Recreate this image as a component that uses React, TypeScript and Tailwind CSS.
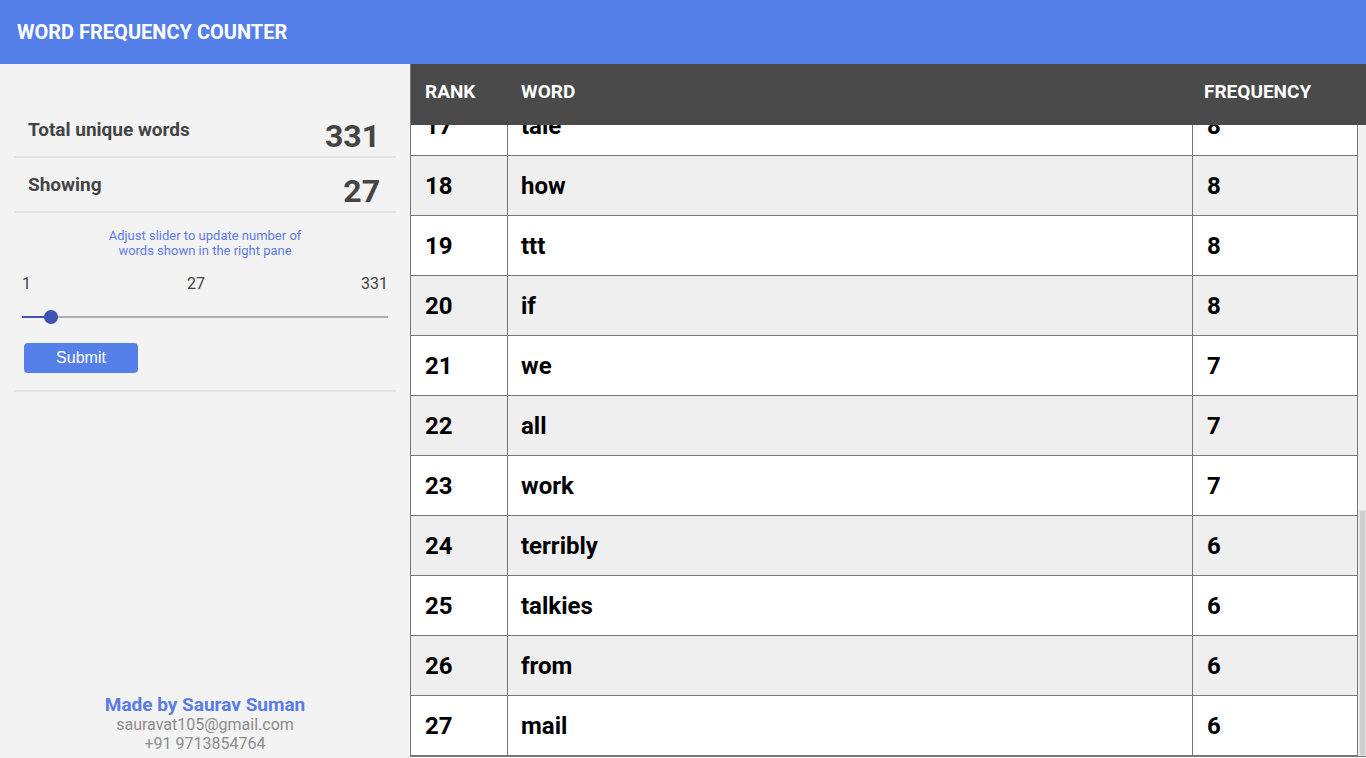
import { useEffect, useRef } from 'react'

const rows: [number, string, number][] = [
  [1, 'the', 31], [2, 'to', 24], [3, 'and', 21], [4, 'a', 19], [5, 'of', 17],
  [6, 'i', 15], [7, 'is', 14], [8, 'in', 13], [9, 'it', 12], [10, 'you', 12],
  [11, 'that', 11], [12, 'for', 11], [13, 'this', 10], [14, 'be', 10], [15, 'on', 9],
  [16, 'with', 9], [17, 'tale', 8], [18, 'how', 8], [19, 'ttt', 8], [20, 'if', 8],
  [21, 'we', 7], [22, 'all', 7], [23, 'work', 7], [24, 'terribly', 6], [25, 'talkies', 6],
  [26, 'from', 6], [27, 'mail', 6],
]

const total = 331
const showing = 27

function Stat({ label, value }: { label: string; value: number }) {
  return (
    <>
      <div className="flex h-[53px] items-start justify-between">
        <span className="pl-[14px] pt-[16px] text-[19px] leading-[22px] font-bold text-[#444]">{label}</span>
        <span className="pr-[16px] pt-[17px] text-[32px] leading-[32px] font-bold text-[#444]">{value}</span>
      </div>
      <div className="h-[2px] bg-[#e3e3e3]" />
    </>
  )
}

export default function App() {
  const bodyRef = useRef<HTMLDivElement>(null)

  useEffect(() => {
    if (bodyRef.current) bodyRef.current.scrollTop = bodyRef.current.scrollHeight
  }, [])

  const pct = ((showing - 1) / (total - 1)) * 100

  return (
    <div className="flex h-screen flex-col overflow-hidden font-['Roboto',sans-serif]">
      <header className="flex h-16 shrink-0 items-center bg-[#5680e9] px-[17px]">
        <h1 className="text-[20px] font-bold text-white">WORD FREQUENCY COUNTER</h1>
      </header>

      <div className="flex min-h-0 flex-1">
        {/* left pane */}
        <aside className="flex w-[410px] shrink-0 flex-col bg-[#f3f3f3] px-[14px]">
          <div className="pt-[39px]">
            <Stat label="Total unique words" value={total} />
            <Stat label="Showing" value={showing} />
          </div>

          <p className="mt-[15px] text-center text-[13px] leading-[15px] text-[#5f7ae6]">
            Adjust slider to update number of
            <br />
            words shown in the right pane
          </p>

          <div className="px-[8px]">
            <div className="mt-[16px] flex justify-between text-[16px] leading-[19px] text-[#444]">
              <span>1</span>
              <span>{showing}</span>
              <span>{total}</span>
            </div>
            <div className="relative mt-[17px] h-[14px]">
              <div className="absolute top-[6px] h-[2px] w-full bg-[#b0b0b0]" />
              <div className="absolute top-[6px] h-[2px] bg-[#3f51b5]" style={{ width: `${pct}%` }} />
              <div
                className="absolute top-0 h-[14px] w-[14px] -translate-x-1/2 rounded-full bg-[#3f51b5]"
                style={{ left: `${pct}%` }}
              />
            </div>
          </div>

          <div className="px-[10px]">
            <button className="mt-[19px] h-[30px] w-[114px] rounded-[4px] bg-[#5680e9] font-['Liberation_Sans',Arial,sans-serif] text-[16px] text-white">
              Submit
            </button>
          </div>

          <div className="mt-[17px] h-[2px] bg-[#e3e3e3]" />

          <footer className="mt-auto pb-[5px] text-center">
            <div className="text-[19px] leading-[21px] font-bold text-[#5a7be8]">Made by Saurav Suman</div>
            <div className="text-[16px] leading-[19px] text-[#8c8c8c]">sauravat105@gmail.com</div>
            <div className="text-[16px] leading-[19px] text-[#8c8c8c]">+91 9713854764</div>
          </footer>
        </aside>

        {/* right pane */}
        <section className="mb-[1px] flex min-w-0 flex-1 flex-col border-b border-l border-[#777]">
          <div className="grid h-[61px] shrink-0 grid-cols-[97px_685px_1fr] bg-[#4a4a4a] pt-[17px] text-[19px] leading-[22px] font-bold text-white">
            <span className="pl-[14px]">RANK</span>
            <span className="pl-[13px]">WORD</span>
            <span className="pl-[11px]">FREQUENCY</span>
          </div>
          <div className="flex min-h-0 flex-1">
            <div ref={bodyRef} className="min-h-0 flex-1 overflow-hidden">
              {rows.map(([rank, word, freq]) => (
                <div
                  key={rank}
                  className={`grid h-[60px] grid-cols-[97px_685px_1fr] border-b border-[#777] text-[24px] font-bold text-black ${
                    rank % 2 === 0 ? 'bg-[#efefef]' : 'bg-white'
                  }`}
                >
                  <div className="flex items-center border-r border-[#777] pl-[14px]">{rank}</div>
                  <div className="flex items-center border-r border-[#777] pl-[13px]">{word}</div>
                  <div className="flex items-center border-r border-[#777] pl-[14px]">{freq}</div>
                </div>
              ))}
            </div>
            {/* scrollbar */}
            <div className="flex w-[8px] shrink-0 flex-col justify-end bg-[#f1f1f1] pl-[1px]">
              <div className="h-[39%] border border-[#e2e2e2] bg-[#cfcfcf]" />
            </div>
          </div>
        </section>
      </div>
    </div>
  )
}
